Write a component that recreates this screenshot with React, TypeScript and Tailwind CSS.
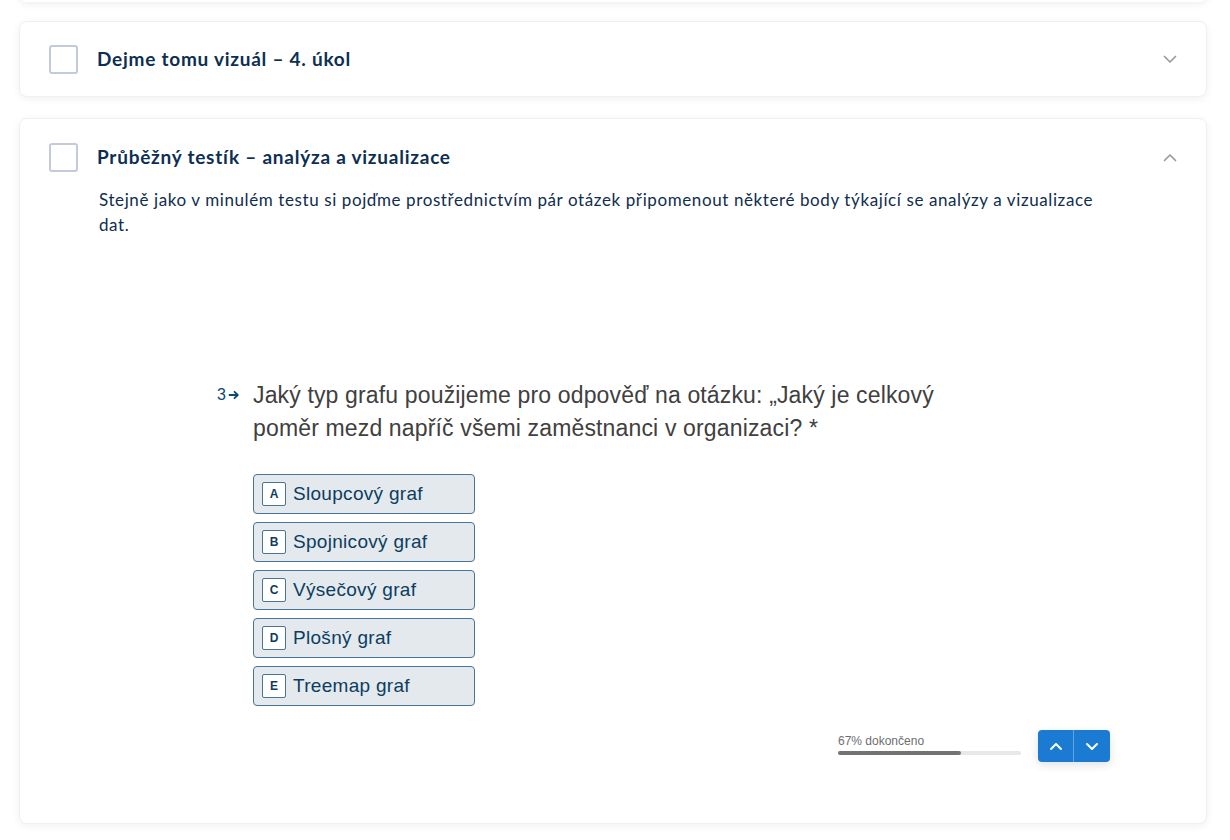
import React from "react";

const Chevron = ({ up }: { up?: boolean }) => (
  <svg width="14" height="9" viewBox="0 0 14 9" fill="none" className="block">
    <path
      d={up ? "M1.5 7.5 L7 2 L12.5 7.5" : "M1.5 1.5 L7 7 L12.5 1.5"}
      stroke="#9a9a9a"
      strokeWidth="1.7"
      strokeLinecap="round"
      strokeLinejoin="round"
    />
  </svg>
);

const Checkbox = () => (
  <div className="w-[29px] h-[29px] shrink-0 rounded-[3px] border-2 border-[#c3cbdb] bg-white" />
);

const options = [
  ["A", "Sloupcový graf"],
  ["B", "Spojnicový graf"],
  ["C", "Výsečový graf"],
  ["D", "Plošný graf"],
  ["E", "Treemap graf"],
];

export default function App() {
  return (
    <div className="min-h-[840px] bg-white pl-[19px] pr-[23px] overflow-hidden" style={{ fontFamily: "Lato, 'Noto Sans', sans-serif" }}>
      <div className="h-[20px] -mt-[18px] rounded-lg bg-white shadow-[0_2px_8px_rgba(0,0,0,0.07)]" />
      <div className="mt-[19px] h-[76px] rounded-lg border border-[#f0f0f0] bg-white shadow-[0_2px_8px_rgba(0,0,0,0.06)] flex items-center pl-[29px] pr-[29px]">
        <Checkbox />
        <div className="ml-[19px] text-[19px] font-bold text-[#0d2f52] tracking-[0.75px]">Dejme tomu vizuál – 4. úkol</div>
        <div className="ml-auto"><Chevron /></div>
      </div>

      <div className="mt-[21px] h-[706px] rounded-lg border border-[#f0f0f0] bg-white shadow-[0_2px_8px_rgba(0,0,0,0.06)] pl-[29px] pr-[29px] pt-[24px]">
        <div className="flex items-center">
          <Checkbox />
          <div className="ml-[19px] text-[19px] font-bold text-[#0d2f52] tracking-[0.75px]">Průběžný testík – analýza a vizualizace</div>
          <div className="ml-auto"><Chevron up /></div>
        </div>
        <p className="mt-[15px] ml-[50px] max-w-[1020px] text-[17px] leading-[25px] text-[#0f2d4f] tracking-[0.6px]">
          Stejně jako v minulém testu si pojďme prostřednictvím pár otázek připomenout některé body týkající se analýzy a vizualizace dat.
        </p>

        <div className="mt-[142px] ml-[168px] w-[904px]" style={{ fontFamily: "'Liberation Sans', Arial, sans-serif" }}>
          <div className="flex">
            <div className="w-[36px] shrink-0 flex items-start pt-[6px] text-[#0c4a75]">
              <span className="text-[16px] leading-[20px]">3</span>
              <svg width="12" height="12" viewBox="0 0 12 12" className="ml-[2px] mt-[4px]" fill="none">
                <path d="M1.5 6 H9.5 M6.5 2.8 L9.8 6 L6.5 9.2" stroke="#0c4a75" strokeWidth="1.8" strokeLinecap="round" strokeLinejoin="round" />
              </svg>
            </div>
            <div className="w-[720px] text-[23px] leading-[33px] tracking-[0.15px] text-[#404040]">
              Jaký typ grafu použijeme pro odpověď na otázku: „Jaký je celkový poměr mezd napříč všemi zaměstnanci v organizaci? *
            </div>
          </div>

          <div className="ml-[36px] mt-[29px] flex flex-col gap-[8px]">
            {options.map(([k, t]) => (
              <div key={k} className="w-[222px] h-[40px] rounded-[4px] border border-[#4a7594] bg-[#e4e9ee] flex items-center pl-[8px]">
                <div className="w-[24px] h-[24px] rounded-[2px] border border-[#4a7594] bg-white flex items-center justify-center text-[12px] font-bold text-[#0c3d5f]">
                  {k}
                </div>
                <span className="ml-[7px] text-[19px] tracking-[0.3px] text-[#0c3d5f]">{t}</span>
              </div>
            ))}
          </div>

          <div className="mt-[24px] flex items-start">
            <div className="ml-[621px] w-[183px] pt-[5px]">
              <div className="text-[12px] leading-[13px] text-[#6e6e6e]">67% dokončeno</div>
              <div className="mt-[3px] h-[4px] rounded-full bg-[#e8e8e8]">
                <div className="h-full rounded-full bg-[#737373]" style={{ width: "67%" }} />
              </div>
            </div>
            <div className="ml-[17px] flex h-[32px] rounded-[4px] bg-[#1b7bd3] shadow-[0_3px_10px_rgba(0,0,0,0.12)] overflow-hidden">
              <div className="w-[36px] flex items-center justify-center border-r border-[#5fa3e3]">
                <svg width="14" height="9" viewBox="0 0 14 9" fill="none"><path d="M2 7 L7 2 L12 7" stroke="white" strokeWidth="2" strokeLinecap="round" strokeLinejoin="round" /></svg>
              </div>
              <div className="w-[36px] flex items-center justify-center">
                <svg width="14" height="9" viewBox="0 0 14 9" fill="none"><path d="M2 2 L7 7 L12 2" stroke="white" strokeWidth="2" strokeLinecap="round" strokeLinejoin="round" /></svg>
              </div>
            </div>
          </div>
        </div>
      </div>
    </div>
  );
}
